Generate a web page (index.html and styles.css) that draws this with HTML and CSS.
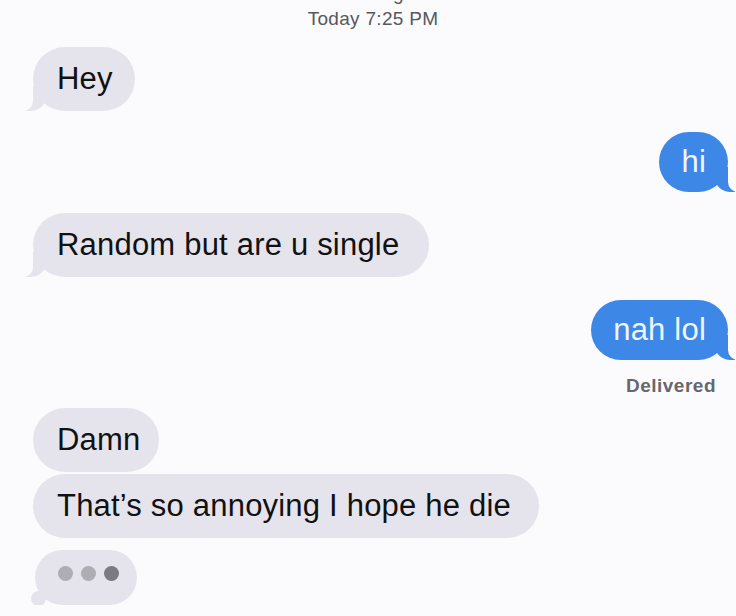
FILE: index.html
```html
<!DOCTYPE html>
<html lang="en">
<head>
    <meta charset="UTF-8">
    <meta name="viewport" content="width=device-width, initial-scale=1.0">
    <title>Messages</title>
    <link rel="stylesheet" href="styles.css">
</head>
<body>
    <div class="thread">
        <div class="header">
            <div class="service">iMessage</div>
            <div class="time">Today 7:25 PM</div>
        </div>

        <div class="msg them tail first">Hey</div>
        <div class="msg me tail hi">hi</div>
        <div class="msg them tail random">Random but are u single</div>
        <div class="msg me tail nah">nah lol</div>
        <div class="status">Delivered</div>

        <div class="msg them damn">Damn</div>
        <div class="msg them joined">That’s so annoying I hope he die</div>

        <div class="typing">
            <span class="dot"></span>
            <span class="dot"></span>
            <span class="dot dark"></span>
        </div>
    </div>
</body>
</html>
```

FILE: styles.css
```css
body {
    margin: 0;
    background-color: #fbfbfd;
    font-family: "Liberation Sans", Arial, sans-serif;
    overflow: hidden;
}
.thread {
    display: flex;
    flex-direction: column;
    padding: 0 8px 0 33px;
}
.header {
    align-self: center;
    text-align: center;
    margin-top: -17px;
    margin-left: -15px;
    color: #58585c;
    font-size: 19px;
    letter-spacing: 0.3px;
}
.service {
    line-height: 22px;
}
.time {
    line-height: 22px;
    margin-top: 3px;
}

.msg {
    position: relative;
    font-size: 31px;
    letter-spacing: 0.2px;
    line-height: 36px;
    white-space: nowrap;
}
.them {
    align-self: flex-start;
    background-color: #e5e4ed;
    color: #111;
    padding: 14px 22px 14px 24px;
    border-radius: 32px;
}
.me {
    align-self: flex-end;
    background-color: #3d87e6;
    color: #eef5ff;
    padding: 12px 22px;
    border-radius: 30px;
}

/* bubble tails */
.tail::before,
.tail::after {
    content: "";
    position: absolute;
    bottom: 0;
    height: 25px;
}
.them.tail::before {
    left: -7px;
    width: 20px;
    background-color: #e5e4ed;
    border-bottom-right-radius: 16px 14px;
}
.them.tail::after {
    left: -26px;
    width: 26px;
    background-color: #fbfbfd;
    border-bottom-right-radius: 10px;
}
.me.tail::before {
    right: -7px;
    width: 20px;
    background-color: #3d87e6;
    border-bottom-left-radius: 16px 14px;
}
.me.tail::after {
    right: -26px;
    width: 26px;
    background-color: #fbfbfd;
    border-bottom-left-radius: 10px;
}

.first { margin-top: 17px; }
.hi { margin-top: 21px; }
.random { margin-top: 21px; padding-right: 30px; }
.nah { margin-top: 23px; }
.damn { margin-top: 12px; padding-right: 18px; }
.joined { margin-top: 2px; padding-right: 28px; }

.status {
    align-self: flex-end;
    margin: 16px 12px 0 0;
    font-size: 19px;
    line-height: 20px;
    font-weight: bold;
    letter-spacing: 0.5px;
    color: #67676b;
}

.typing {
    position: relative;
    align-self: flex-start;
    display: flex;
    gap: 8px;
    margin: 12px 0 0 2px;
    padding: 16px 18px 24px 23px;
    background-color: #e5e4ed;
    border-radius: 28px;
}
.typing::before {
    content: "";
    position: absolute;
    left: -4px;
    bottom: -1px;
    width: 15px;
    height: 15px;
    border-radius: 50%;
    background-color: #e5e4ed;
}
.typing::after {
    content: "";
    position: absolute;
    left: -13px;
    bottom: -11px;
    width: 10px;
    height: 10px;
    border-radius: 50%;
    background-color: #e5e4ed;
}
.dot {
    width: 15px;
    height: 15px;
    border-radius: 50%;
    background-color: #aeadb4;
}
.dot.dark {
    background-color: #7b7a80;
}
```
